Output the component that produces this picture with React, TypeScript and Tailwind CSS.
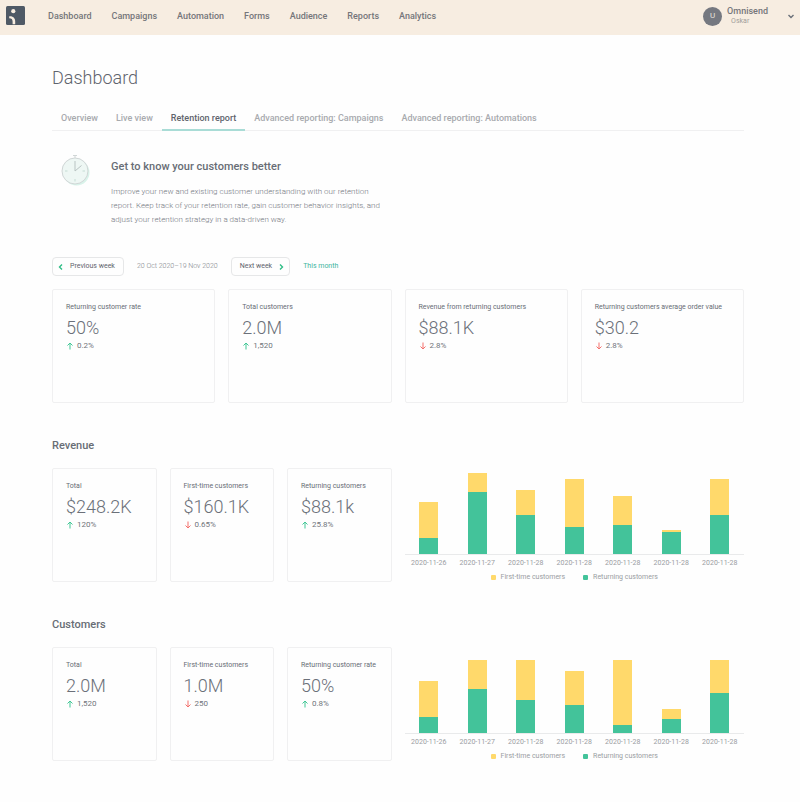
type Stat = {
  label: string;
  value: string;
  change: string;
  up: boolean;
};

type Day = {
  date: string;
  firstTime: number;
  returning: number;
};

const navItems = ["Dashboard", "Campaigns", "Automation", "Forms", "Audience", "Reports", "Analytics"];

const tabs = [
  "Overview",
  "Live view",
  "Retention report",
  "Advanced reporting: Campaigns",
  "Advanced reporting: Automations",
];

const summary: Stat[] = [
  { label: "Returning customer rate", value: "50%", change: "0.2%", up: true },
  { label: "Total customers", value: "2.0M", change: "1,520", up: true },
  { label: "Revenue from returning customers", value: "$88.1K", change: "2.8%", up: false },
  { label: "Returning customers average order value", value: "$30.2", change: "2.8%", up: false },
];

const revenueStats: Stat[] = [
  { label: "Total", value: "$248.2K", change: "120%", up: true },
  { label: "First-time customers", value: "$160.1K", change: "0.65%", up: false },
  { label: "Returning customers", value: "$88.1k", change: "25.8%", up: true },
];

const customerStats: Stat[] = [
  { label: "Total", value: "2.0M", change: "1,520", up: true },
  { label: "First-time customers", value: "1.0M", change: "250", up: false },
  { label: "Returning customer rate", value: "50%", change: "0.8%", up: true },
];

const revenueDays: Day[] = [
  { date: "2020-11-26", firstTime: 36, returning: 16 },
  { date: "2020-11-27", firstTime: 19, returning: 62 },
  { date: "2020-11-28", firstTime: 25, returning: 39 },
  { date: "2020-11-28", firstTime: 48, returning: 27 },
  { date: "2020-11-28", firstTime: 29, returning: 29 },
  { date: "2020-11-28", firstTime: 2, returning: 22 },
  { date: "2020-11-28", firstTime: 36, returning: 39 },
];

const customerDays: Day[] = [
  { date: "2020-11-26", firstTime: 36, returning: 16 },
  { date: "2020-11-27", firstTime: 29, returning: 44 },
  { date: "2020-11-28", firstTime: 40, returning: 33 },
  { date: "2020-11-28", firstTime: 34, returning: 28 },
  { date: "2020-11-28", firstTime: 65, returning: 8 },
  { date: "2020-11-28", firstTime: 10, returning: 14 },
  { date: "2020-11-28", firstTime: 33, returning: 40 },
];

function Logo() {
  return (
    <svg className="h-[19px] w-[19px]" viewBox="0 0 19 19" aria-hidden="true">
      <rect width="19" height="19" rx="1.5" fill="#4f5965" />
      <circle cx="7.3" cy="5.2" r="2.1" fill="#f8ede0" />
      <path d="M3.2 10.2C7 9.8 9.2 12 9.2 15.4V18.2H6.6V15.8C6.6 13.4 5.6 12.3 3.2 12.3Z" fill="#f8ede0" />
    </svg>
  );
}

function Stopwatch() {
  return (
    <svg className="h-8 w-8" viewBox="0 0 32 32" fill="none" aria-hidden="true">
      <circle cx="16.5" cy="18.5" r="13" fill="#d9f3ea" />
      <circle cx="15" cy="17" r="13" fill="#eef7f4" stroke="#d0d6d6" />
      <path d="M13 1.5H17M15 2V4" stroke="#d0d6d6" />
      <path d="M15 7V17L21.5 11.5" stroke="#b9c4c3" />
      <path d="M5 17H7.5M22.5 17H25M15 25V27.5" stroke="#c5dcd4" />
    </svg>
  );
}

function Chevron({ d, className }: { d: string; className: string }) {
  return (
    <svg className={className} viewBox="0 0 6 6" fill="none" stroke="currentColor" strokeWidth="1.4" aria-hidden="true">
      <path d={d} />
    </svg>
  );
}

function Arrow({ up }: { up: boolean }) {
  return (
    <svg
      className={up ? "h-2 w-2 text-[#41c795]" : "h-2 w-2 text-[#f4706c]"}
      viewBox="0 0 8 8"
      fill="none"
      stroke="currentColor"
      aria-hidden="true"
    >
      <path d={up ? "M4 7.5V1M1.5 3.5L4 1L6.5 3.5" : "M4 0.5V7M1.5 4.5L4 7L6.5 4.5"} />
    </svg>
  );
}

function StatCard({ stat }: { stat: Stat }) {
  return (
    <div className="h-[114px] min-w-0 rounded-xs border border-[#f0f0f1] px-[13px] pt-[11px]">
      <p className="whitespace-nowrap text-[7px] leading-3 text-[#686d75]">{stat.label}</p>
      <p className="mt-[3px] text-[18px] leading-6 font-light text-[#6b7079]">{stat.value}</p>
      <p className="flex items-center gap-[3px] text-[8px] leading-3 text-[#70747b]">
        <Arrow up={stat.up} />
        {stat.change}
      </p>
    </div>
  );
}

function Legend({ color, label }: { color: string; label: string }) {
  return (
    <li className="flex items-center gap-[5px]">
      <span className={`h-[5px] w-[5px] rounded-[1px] ${color}`} />
      {label}
    </li>
  );
}

function BarChart({ days }: { days: Day[] }) {
  return (
    <div className="flex flex-col justify-end text-[7px] leading-[9px] text-[#9a9da2]">
      <div className="grid grid-cols-7 items-end border-b border-[#e9eaeb]">
        {days.map((day, i) => (
          <div key={i} className="mx-auto w-[19px]">
            <div className="bg-[#ffd96b]" style={{ height: day.firstTime }} />
            <div className="bg-[#43c39a]" style={{ height: day.returning }} />
          </div>
        ))}
      </div>
      <div className="mt-1 grid grid-cols-7 text-center">
        {days.map((day, i) => (
          <span key={i}>{day.date}</span>
        ))}
      </div>
      <ul className="mt-[5px] flex justify-center gap-[18px]">
        <Legend color="bg-[#ffd96b]" label="First-time customers" />
        <Legend color="bg-[#43c39a]" label="Returning customers" />
      </ul>
    </div>
  );
}

function Section({ title, stats, days }: { title: string; stats: Stat[]; days: Day[] }) {
  return (
    <section className="mt-[35px]">
      <h2 className="text-[11px] leading-4 font-medium text-[#686d75]">{title}</h2>
      <div className="mt-[14px] grid grid-cols-2 gap-[13px]">
        <div className="grid grid-cols-3 gap-[13px]">
          {stats.map((stat) => (
            <StatCard key={stat.label} stat={stat} />
          ))}
        </div>
        <BarChart days={days} />
      </div>
    </section>
  );
}

export default function App() {
  return (
    <div className="min-h-screen bg-[#fefefe] pb-10 font-[Roboto,sans-serif]">
      <header className="flex h-[35px] items-start justify-between bg-[#f7ede1] px-[6px] pt-[6px]">
        <div className="flex items-center gap-[23px]">
          <Logo />
          <nav className="flex gap-5 text-[9px] leading-4 font-medium text-[#75767a]">
            {navItems.map((item) => (
              <a key={item} href="#">
                {item}
              </a>
            ))}
          </nav>
        </div>
        <button className="flex items-center text-left">
          <span className="flex h-[19px] w-[19px] items-center justify-center rounded-full bg-[#757880] text-[8px] text-[#e9e4df]">
            U
          </span>
          <span className="ml-[5px]">
            <span className="block text-[9px] leading-[10px] font-medium text-[#75767a]">Omnisend</span>
            <span className="block pl-1 text-[7px] leading-[10px] text-[#a19e9b]">Oskar</span>
          </span>
          <Chevron d="M0.5 2L3 4.5L5.5 2" className="ml-5 h-[6px] w-[6px] text-[#6b7079]" />
        </button>
      </header>

      <main className="pr-[56px] pl-[52px]">
        <h1 className="pt-[31px] text-[18px] leading-6 font-light text-[#5f646d]">Dashboard</h1>

        <div className="mt-4 flex border-b border-[#f0f0f1] text-[9px] leading-4 font-medium">
          {tabs.map((tab) => (
            <button
              key={tab}
              className={
                tab === "Retention report"
                  ? "-mb-px border-b-2 border-[#a9dcd6] px-[9px] pt-1 pb-[3px] text-[#5f646d]"
                  : "-mb-px border-b-2 border-transparent px-[9px] pt-1 pb-[3px] text-[#a8aaae]"
              }
            >
              {tab}
            </button>
          ))}
        </div>

        <section className="mt-[23px] flex gap-[19px] pl-2">
          <Stopwatch />
          <div>
            <h2 className="pt-[5px] text-[11px] leading-4 font-medium text-[#686d75]">
              Get to know your customers better
            </h2>
            <p className="mt-[10px] max-w-[280px] text-[8px] leading-[14px] font-light text-[#73777e]">
              Improve your new and existing customer understanding with our retention report. Keep track of your
              retention rate, gain customer behavior insights, and adjust your retention strategy in a data-driven way.
            </p>
          </div>
        </section>

        <div className="mt-[30px] flex items-center text-[7px] leading-[17px]">
          <button className="flex items-center gap-[6px] rounded-sm border border-[#e6e7e8] pr-2 pl-[5px] text-[#5f646d]">
            <Chevron d="M4 0.5L1.5 3L4 5.5" className="h-[6px] w-[6px] text-[#2fbd86]" />
            Previous week
          </button>
          <span className="ml-[13px] font-light text-[#80848a]">20 Oct 2020–19 Nov 2020</span>
          <button className="ml-[13px] flex items-center gap-[6px] rounded-sm border border-[#e6e7e8] pr-[5px] pl-2 text-[#5f646d]">
            Next week
            <Chevron d="M2 0.5L4.5 3L2 5.5" className="h-[6px] w-[6px] text-[#2fbd86]" />
          </button>
          <a href="#" className="ml-[13px] text-[#3fb5a0]">
            This month
          </a>
        </div>

        <div className="mt-[13px] grid grid-cols-4 gap-[13px]">
          {summary.map((stat) => (
            <StatCard key={stat.label} stat={stat} />
          ))}
        </div>

        <Section title="Revenue" stats={revenueStats} days={revenueDays} />
        <Section title="Customers" stats={customerStats} days={customerDays} />
      </main>
    </div>
  );
}
